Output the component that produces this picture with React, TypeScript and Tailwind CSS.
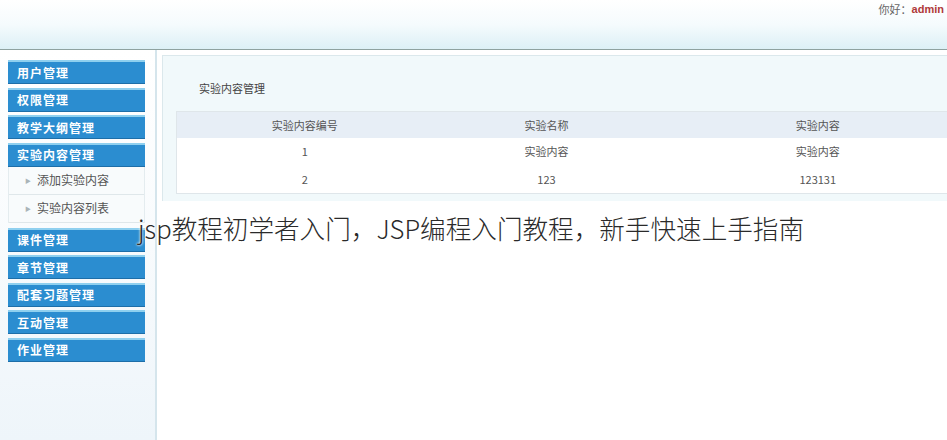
const menusTop = ["用户管理", "权限管理", "教学大纲管理", "实验内容管理"];
const subMenus = ["添加实验内容", "实验内容列表"];
const menusBottom = ["课件管理", "章节管理", "配套习题管理", "互动管理", "作业管理"];

const rows = [
    { id: "1", name: "实验内容", content: "实验内容" },
    { id: "2", name: "123", content: "123131" },
];

function MenuItem({ label }: { label: string }) {
    return (
        <div className="h-[24px] mb-[3.5px] w-[137px] flex items-center pl-[9px] bg-[#2b8dd0] border-t-2 border-[#8fd0ef] border-b border-b-[#1d6ea8] text-white text-[12px] font-bold tracking-[1px]">
            {label}
        </div>
    );
}

export default function App() {
    return (
        <div className="relative w-[947px] h-[440px] overflow-hidden bg-white font-['Noto_Sans_CJK_SC',sans-serif] text-[#444]">
            <div className="h-[50px] bg-gradient-to-b from-white via-[#f5fbfd] to-[#dcf0f6] border-b border-[#8ea2a0] flex justify-end items-start pt-[1px] pr-[3px] text-[11px]">
                <span className="text-[#666]">你好：</span>
                <span className="text-[#b03a3a] font-['Liberation_Sans',sans-serif] font-bold">admin</span>
            </div>

            <div className="flex h-[390px]">
                <aside className="w-[157px] shrink-0 border-r-2 border-[#d5e5ec] bg-gradient-to-b from-white via-[#f8fbfd] to-[#eef5fa] pt-[10px] pl-[8px]">
                    {menusTop.map((m) => (
                        <MenuItem key={m} label={m} />
                    ))}
                    <div className="-mt-[3.5px] mb-[5px] w-[137px] bg-[#f8fbfc] border-l border-r border-[#e4ecef]">
                        {subMenus.map((s) => (
                            <div key={s} className="h-[28px] flex items-center gap-[6px] pl-[16px] border-b border-[#dfe7ea] text-[12px] text-[#555]">
                                <span className="text-[6px] text-[#aab4b8]">▶</span>
                                {s}
                            </div>
                        ))}
                    </div>
                    {menusBottom.map((m) => (
                        <MenuItem key={m} label={m} />
                    ))}
                </aside>

                <main className="flex-1 min-w-0 pt-[5px] pl-[5px]">
                    <div className="h-[146px] bg-[#f1f9fb] border-l border-t border-[#dbe8ec] pl-[13px]">
                        <div className="h-[55px] pl-[23px] pt-[24px] text-[11px] text-[#444]">实验内容管理</div>
                        <table className="w-[800px] bg-white border border-[#dfe6ea] text-[11px] text-[#555] text-center">
                            <thead>
                                <tr className="h-[26px] bg-[#e7eef6] border-t border-dashed border-[#c9d3da]">
                                    <th className="w-[256px] font-normal">实验内容编号</th>
                                    <th className="w-[228px] font-normal">实验名称</th>
                                    <th className="font-normal">实验内容</th>
                                </tr>
                            </thead>
                            <tbody>
                                {rows.map((r) => (
                                    <tr key={r.id} className="h-[28px]">
                                        <td>{r.id}</td>
                                        <td>{r.name}</td>
                                        <td>{r.content}</td>
                                    </tr>
                                ))}
                            </tbody>
                        </table>
                    </div>
                </main>
            </div>

            <div className="absolute left-[138px] top-[210px] text-[25.6px] leading-[36px] font-light text-[#2a2a2a] font-['Noto_Sans_CJK_SC',sans-serif] [text-shadow:0_0_3px_#fff,0_0_2px_#fff]">
                jsp教程初学者入门，JSP编程入门教程，新手快速上手指南
            </div>
        </div>
    );
}
